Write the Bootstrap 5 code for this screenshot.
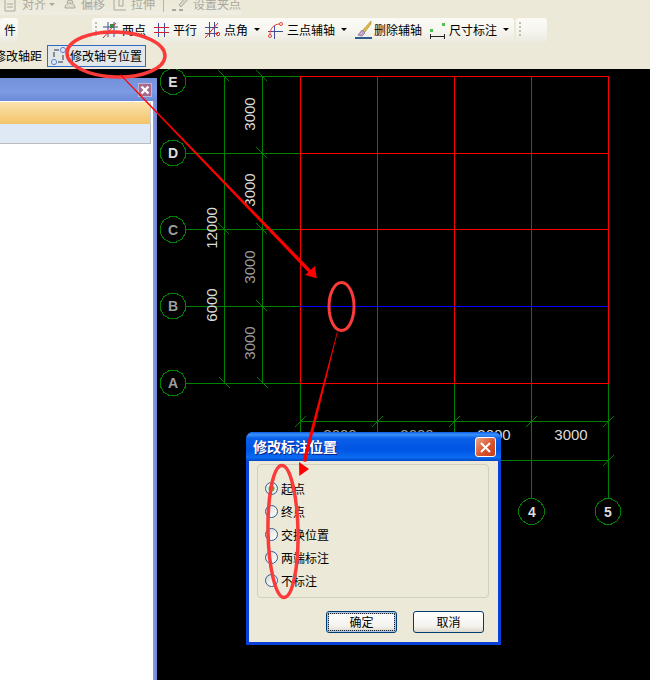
<!DOCTYPE html>
<html lang="zh-CN">

<head>
    <meta charset="UTF-8">
    <meta name="viewport" content="width=device-width, initial-scale=1.0">
    <title>修改标注位置</title>
    <link href="https://cdn.jsdelivr.net/npm/bootstrap@5.3.0/dist/css/bootstrap.min.css" rel="stylesheet">
    <style>
        body {
            margin: 0;
            overflow: hidden;
            background: #000;
            font-family: "Noto Sans CJK SC", "Liberation Sans", sans-serif;
            font-size: 12px;
            line-height: 16px;
            color: #000;
        }

        .screen {
            width: 650px;
            height: 680px;
        }

        /* toolbars */
        .tool-area {
            height: 69px;
            background: #ece9d8;
            white-space: nowrap;
        }

        .tool-faded {
            width: 242px;
            height: 15px;
            padding: 0 0 3px 4px;
            gap: 8px;
            overflow: hidden;
            color: #a9a89c;
            background: linear-gradient(#ece9d8, #efede2);
            border-radius: 0 0 3px 0;
        }

        .tool-row {
            height: 25px;
            margin-top: 3px;
        }

        .tool-piece {
            height: 25px;
            padding-bottom: 2px;
            gap: 8px;
            background: linear-gradient(#fbfaf6, #f7f6f0 45%, #eceade);
            border-radius: 3px;
        }

        .piece-left {
            width: 18px;
            padding-left: 4px;
        }

        .piece-main {
            width: 422px;
            margin-left: 74px;
            padding-left: 3px;
        }

        .piece-end {
            width: 31px;
            margin-left: 2px;
            padding-left: 3px;
        }

        .grip {
            width: 2px;
            height: 15px;
            margin-right: -3px;
            background: repeating-linear-gradient(#bdbdb5 0 2px, transparent 2px 4px);
        }

        .tool-item {
            gap: 4px;
        }

        .tool-brush {
            gap: 2px;
        }

        .caret-down {
            width: 0;
            height: 0;
            margin-left: 2px;
            border-left: 3px solid transparent;
            border-right: 3px solid transparent;
            border-top: 3px solid #000;
        }

        .caret-faded {
            margin-left: -1px;
            border-top-color: #a9a89c;
        }

        .tool-sep {
            width: 1px;
            height: 15px;
            background: #b5b4a8;
        }

        .tool-row-3 {
            height: 23px;
            margin-top: 1px;
        }

        .clipped-text {
            margin-left: -6px;
        }

        .tool-active {
            width: 99px;
            height: 22px;
            margin-left: 5px;
            padding-left: 3px;
            gap: 3px;
            background: #e1e6e8;
            border: 1px solid #316ac5;
        }

        /* left panel */
        .side-wrap {
            width: 158px;
            padding-top: 9px;
        }

        .side-panel {
            width: 157px;
            height: 100%;
            padding-right: 4px;
            background: linear-gradient(90deg, #8a9ee0, #6f86d4);
            background-position: right;
            background-size: 4px 100%;
            background-repeat: no-repeat;
        }

        .side-title {
            height: 23px;
            padding: 6px 2px 0 0;
            margin-right: -4px;
            background: linear-gradient(#7391da, #7b9be3 60%, #6c89d6);
        }

        .side-close {
            width: 12px;
            height: 12px;
            margin-right: 4px;
            background: #a9698b;
            outline: 1px solid #b9b6dd;
        }

        .side-body {
            height: 100%;
            background: #fff;
            padding-top: 1px;
        }

        .side-head {
            width: 151px;
            height: 22px;
            background: linear-gradient(#fbe3ac, #f3c469);
            border-right: 1px solid #c9c9c9;
        }

        .side-sub {
            width: 151px;
            height: 20px;
            background: #dfe8f5;
            border-right: 1px solid #bdbdbd;
            border-bottom: 1px solid #bdbdbd;
        }

        .cad-canvas {
            width: 492px;
            height: 611px;
            display: block;
        }

        .cad-text {
            font-family: "Liberation Sans", sans-serif;
            font-size: 15px;
            text-anchor: middle;
            dominant-baseline: central;
        }

        .axis-letter {
            font-size: 14px;
            font-weight: 700;
        }

        .txt-bright { fill: #dcdcdc; }
        .txt-dim { fill: #9d9d9d; }

        .overlay-svg {
            left: 0;
            top: 0;
            z-index: 30;
            pointer-events: none;
        }

        /* dialog */
        .xp-dialog {
            left: 246px;
            top: 432px;
            width: 255px;
            height: 213px;
            z-index: 20;
            background: #ece9d8;
            border: 3px solid #0840d8;
            border-top: 0;
            border-radius: 7px 7px 0 0;
        }

        .xp-title {
            height: 29px;
            margin: 0 -3px;
            padding: 4px 5px 0 7px;
            border-radius: 7px 7px 0 0;
            background: linear-gradient(#0a5fe6, #3a8ffb 9%, #0a5fe8 22%, #0054e3 60%, #0a6bf2 88%, #0047c4);
            color: #fff;
            font-size: 14px;
            font-weight: 700;
            line-height: 20px;
            text-shadow: 1px 1px 0 #0a1f8c;
        }

        .xp-close {
            width: 21px;
            height: 20px;
            margin-top: 1px;
            background: linear-gradient(135deg, #eba78c, #d9532c 55%, #c43e1c);
            border: 1px solid #fff;
            border-radius: 3px;
        }

        .xp-group {
            width: 232px;
            height: 134px;
            margin: 3px 0 0 8px;
            padding: 12px 0 0 7px;
            border: 1px solid #d0d0bf;
            border-radius: 4px;
        }

        .xp-option {
            height: 23px;
            gap: 3px;
            margin: 0;
            padding: 0;
        }

        .xp-radio {
            width: 13px;
            height: 13px;
            margin: 0;
            float: none;
            border: 1px solid #2f5f94;
            background: linear-gradient(135deg, #dcdcd4, #fff);
        }

        .xp-radio:checked {
            border-color: #2f5f94;
            background: radial-gradient(circle, #3fb52f 0 2.5px, #e8efe8 3.5px);
        }

        .xp-buttons {
            gap: 16px;
            margin: 13px 14px 0 0;
        }

        .xp-btn {
            width: 71px;
            height: 22px;
            padding: 0;
            font-size: 12px;
            line-height: 20px;
            color: #000;
            border: 1px solid #003c74;
            border-radius: 3px;
            background: linear-gradient(#fff, #f4f3ee 70%, #dcd8cb);
        }

        .xp-default {
            box-shadow: inset 0 0 0 2px #a9c5ec;
            outline: 1px dotted #222;
            outline-offset: -3px;
        }
    </style>
</head>

<body>

    <div class="screen position-relative d-flex flex-column overflow-hidden">

        <div class="tool-area flex-shrink-0">
            <div class="tool-faded d-flex align-items-end">
                <div class="tool-item d-flex align-items-center">
                    <svg width="14" height="16" viewBox="0 0 14 16">
                        <path d="M1 1h7l3 3v11H1z" fill="none" stroke="#a9a89c" />
                        <path d="M3 8h6M3 11h6" stroke="#a9a89c" />
                    </svg>
                    <span>对齐</span>
                    <span class="caret-down caret-faded"></span>
                </div>
                <div class="tool-item d-flex align-items-center">
                    <svg width="14" height="16" viewBox="0 0 14 16">
                        <path d="M2 12a5 5 0 0 1 10 0zM4 7a3 3 0 0 1 6 0" fill="#e0ded0" stroke="#a9a89c" />
                    </svg>
                    <span>偏移</span>
                </div>
                <div class="tool-item d-flex align-items-center">
                    <svg width="14" height="16" viewBox="0 0 14 16">
                        <path d="M1 1v13h12M6 1h4v9H6z" fill="none" stroke="#a9a89c" />
                    </svg>
                    <span>拉伸</span>
                </div>
                <span class="tool-sep"></span>
                <div class="tool-item d-flex align-items-center">
                    <svg width="17" height="16" viewBox="0 0 17 16">
                        <path d="M7 9l8-9 2 2-8 9z" fill="#dcdacb" stroke="#a9a89c" />
                        <path d="M0 14h4M7 14h4" stroke="#a9a89c" stroke-width="2" />
                    </svg>
                    <span>设置夹点</span>
                </div>
            </div>

            <div class="tool-row d-flex">
                <div class="tool-piece piece-left d-flex align-items-center"><span>件</span></div>

                <div class="tool-piece piece-main d-flex align-items-center">
                    <span class="grip"></span>
                    <div class="tool-item d-flex align-items-center">
                        <svg width="16" height="18" viewBox="0 0 16 18">
                            <path d="M6 1v15M12 1v15M1 6h15M1 12h15" stroke="#3b4f9e" fill="none" />
                            <path d="M1 17L14 2" stroke="#e02020" />
                            <rect x="8" y="3" width="4" height="4" fill="#3d8a3d" />
                        </svg>
                        <span>两点</span>
                    </div>
                    <div class="tool-item d-flex align-items-center">
                        <svg width="15" height="18" viewBox="0 0 15 18">
                            <path d="M4.5 2v14M10.5 2v14" stroke="#3b4f9e" />
                            <path d="M0 6.5h15M0 11.5h15" stroke="#d02030" />
                        </svg>
                        <span>平行</span>
                    </div>
                    <div class="tool-item d-flex align-items-center">
                        <svg width="15" height="18" viewBox="0 0 15 18">
                            <path d="M4.5 1v15M9.5 1v15M0 6.5h13M0 12.5h13" stroke="#3b4f9e" fill="none" />
                            <path d="M0 17L13 2" stroke="#e02020" />
                            <circle cx="13" cy="13" r="1.7" fill="none" stroke="#e02020" />
                        </svg>
                        <span>点角</span>
                        <span class="caret-down"></span>
                    </div>
                    <div class="tool-item d-flex align-items-center">
                        <svg width="15" height="18" viewBox="0 0 15 18">
                            <path d="M6.5 5v13M0 10.5h15" stroke="#3b4f9e" />
                            <path d="M2 14C2 7 6 3 12 3" stroke="#e04040" fill="none" />
                            <circle cx="13" cy="3" r="1.5" fill="#fff" stroke="#e04040" />
                            <circle cx="2" cy="15" r="1.5" fill="#fff" stroke="#e04040" />
                        </svg>
                        <span>三点辅轴</span>
                        <span class="caret-down"></span>
                    </div>
                    <div class="tool-item tool-brush d-flex align-items-center">
                        <svg width="17" height="18" viewBox="0 0 17 18">
                            <path d="M16 0L8 9l2 2 6-8z" fill="#e2b93a" stroke="#8f7a30" stroke-width=".5" />
                            <path d="M7 9l3 3-3 3-4-1z" fill="#c9a7c9" stroke="#6f4f7f" stroke-width=".6" />
                            <path d="M0 17h17" stroke="#2f5c8f" stroke-width="2" />
                        </svg>
                        <span>删除辅轴</span>
                    </div>
                    <div class="tool-item d-flex align-items-center">
                        <svg width="15" height="18" viewBox="0 0 15 18">
                            <rect x="0" y="8" width="3" height="3" fill="#4fbf4f" />
                            <rect x="12" y="2" width="3" height="3" fill="#4fbf4f" />
                            <path d="M.5 13v5M14.5 13v5M0 15.5h15" stroke="#222" />
                        </svg>
                        <span>尺寸标注</span>
                        <span class="caret-down"></span>
                    </div>
                </div>

                <div class="tool-piece piece-end d-flex align-items-center"><span class="grip"></span></div>
            </div>

            <div class="tool-row-3 d-flex align-items-center">
                <span class="clipped-text">修改轴距</span>
                <div class="tool-active d-flex align-items-center">
                    <svg width="16" height="18" viewBox="0 0 16 18">
                        <path d="M3 3h9v12H3z" fill="none" stroke="#333" stroke-dasharray="5 2" />
                        <circle cx="3" cy="15" r="2.6" fill="#dbe6f7" stroke="#5b85d0" />
                        <circle cx="12" cy="3" r="2.6" fill="#dbe6f7" stroke="#5b85d0" />
                    </svg>
                    <span>修改轴号位置</span>
                </div>
            </div>
        </div>

        <div class="d-flex flex-grow-1 bg-black">
            <div class="side-wrap flex-shrink-0">
                <div class="side-panel d-flex flex-column">
                    <div class="side-title d-flex justify-content-end flex-shrink-0">
                        <div class="side-close d-flex align-items-center justify-content-center">
                            <svg width="10" height="10" viewBox="0 0 10 10">
                                <path d="M1.5 1.5l7 7M8.5 1.5l-7 7" stroke="#fff" stroke-width="2.4" />
                            </svg>
                        </div>
                    </div>
                    <div class="side-body">
                        <div class="side-head"></div>
                        <div class="side-sub"></div>
                    </div>
                </div>
            </div>

            <!-- viewBox uses page coordinates so the drawing numbers line up with the screenshot -->
            <svg class="cad-canvas" viewBox="158 69 492 611">
                <defs>
                    <polygon id="axisMark" fill="none" stroke="#008000" shape-rendering="crispEdges"
                        points="12.6,3.4 9.2,9.2 3.4,12.6 -3.4,12.6 -9.2,9.2 -12.6,3.4 -12.6,-3.4 -9.2,-9.2 -3.4,-12.6 3.4,-12.6 9.2,-9.2 12.6,-3.4" />
                </defs>

                <g stroke="#008000" fill="none" shape-rendering="crispEdges">
                    <path d="M186 76.5H300M186 153.5H300M186 229.5H300M186 306.5H300M186 383.5H300" />
                    <path d="M224.5 76V383M262.5 76V383" />
                    <path d="M300.5 383V461M377.5 383V461M454.5 383V461M531.5 383V499M608.5 383V499" />
                    <path d="M300 421.5H608M300 460.5H608" />
                    <path d="M218 70l11 11M256 70l11 11M256 147l11 11M218 223l11 11M256 223l11 11M256 300l11 11M219 377l11 11M257 377l11 11" />
                    <path d="M295 427l11-11M372 427l11-11M449 427l11-11M526 427l11-11M603 427l11-11M603 466l11-11" />
                </g>
                <g stroke="#f00" fill="none" shape-rendering="crispEdges">
                    <path d="M300 76.5H609M300 153.5H608M300 229.5H608M300 383.5H609" />
                    <path d="M300.5 76V384M377.5 76V383M454.5 76V383M531.5 76V383M608.5 76V384" />
                </g>
                <path d="M300 306.5H608" stroke="#00f" shape-rendering="crispEdges" />

                <use href="#axisMark" x="173" y="81.5" />
                <use href="#axisMark" x="173" y="153" />
                <use href="#axisMark" x="173" y="229.5" />
                <use href="#axisMark" x="173" y="306" />
                <use href="#axisMark" x="173" y="383" />
                <use href="#axisMark" x="531.5" y="511.5" />
                <use href="#axisMark" x="608" y="511.5" />

                <text class="cad-text axis-letter txt-bright" x="173" y="82">E</text>
                <text class="cad-text axis-letter txt-bright" x="173" y="153">D</text>
                <text class="cad-text axis-letter txt-dim" x="173" y="230">C</text>
                <text class="cad-text axis-letter txt-dim" x="173" y="306">B</text>
                <text class="cad-text axis-letter txt-dim" x="173" y="383">A</text>
                <text class="cad-text axis-letter txt-bright" x="532" y="512">4</text>
                <text class="cad-text axis-letter txt-bright" x="608" y="512">5</text>

                <text class="cad-text txt-bright" x="249" y="114" transform="rotate(-90 249 114)">3000</text>
                <text class="cad-text txt-bright" x="249" y="190" transform="rotate(-90 249 190)">3000</text>
                <text class="cad-text txt-dim" x="249" y="267" transform="rotate(-90 249 267)">3000</text>
                <text class="cad-text txt-dim" x="249" y="343" transform="rotate(-90 249 343)">3000</text>
                <text class="cad-text txt-bright" x="211" y="228" transform="rotate(-90 211 228)">12000</text>
                <text class="cad-text txt-bright" x="211" y="305" transform="rotate(-90 211 305)">6000</text>

                <text class="cad-text txt-dim" x="340" y="434">3000</text>
                <text class="cad-text txt-dim" x="417" y="434">3000</text>
                <text class="cad-text txt-bright" x="494" y="434">3000</text>
                <text class="cad-text txt-bright" x="571" y="434">3000</text>
            </svg>
        </div>

        <div class="xp-dialog position-absolute d-flex flex-column">
            <div class="xp-title d-flex justify-content-between align-items-start flex-shrink-0">
                <span>修改标注位置</span>
                <div class="xp-close d-flex align-items-center justify-content-center">
                    <svg width="13" height="13" viewBox="0 0 13 13">
                        <path d="M2 2l9 9M11 2l-9 9" stroke="#fff" stroke-width="2" />
                    </svg>
                </div>
            </div>
            <div class="xp-group">
                <label class="xp-option d-flex align-items-center">
                    <input class="form-check-input xp-radio" type="radio" name="markPos" checked>
                    <span>起点</span>
                </label>
                <label class="xp-option d-flex align-items-center">
                    <input class="form-check-input xp-radio" type="radio" name="markPos">
                    <span>终点</span>
                </label>
                <label class="xp-option d-flex align-items-center">
                    <input class="form-check-input xp-radio" type="radio" name="markPos">
                    <span>交换位置</span>
                </label>
                <label class="xp-option d-flex align-items-center">
                    <input class="form-check-input xp-radio" type="radio" name="markPos">
                    <span>两端标注</span>
                </label>
                <label class="xp-option d-flex align-items-center">
                    <input class="form-check-input xp-radio" type="radio" name="markPos">
                    <span>不标注</span>
                </label>
            </div>
            <div class="xp-buttons d-flex justify-content-end">
                <button type="button" class="btn xp-btn xp-default">确定</button>
                <button type="button" class="btn xp-btn">取消</button>
            </div>
        </div>

        <!-- red hand drawn notes, they run across everything -->
        <svg class="overlay-svg position-absolute" width="650" height="680" viewBox="0 0 650 680">
            <g fill="none" stroke="#fb3a3a">
                <ellipse cx="116" cy="54.5" rx="49" ry="22.5" stroke-width="3.5" transform="rotate(2 116 54)" />
                <ellipse cx="341.5" cy="306.5" rx="12.5" ry="24" stroke-width="3" />
                <ellipse cx="283" cy="531.5" rx="15" ry="66" stroke-width="3.5" transform="rotate(-1 283 531)" />
            </g>
            <g fill="#f00">
                <polygon points="120,75 121,74.5 312,271 309.5,273.5" />
                <polygon points="316.7,278.3 305,275 315,266" />
                <polygon points="337,332 337.7,332 306,462 302.5,461" />
                <polygon points="299.3,476 299,462 309,469" />
            </g>
        </svg>
    </div>

    <script src="https://cdn.jsdelivr.net/npm/bootstrap@5.3.0/dist/js/bootstrap.bundle.min.js"></script>
</body>

</html>
